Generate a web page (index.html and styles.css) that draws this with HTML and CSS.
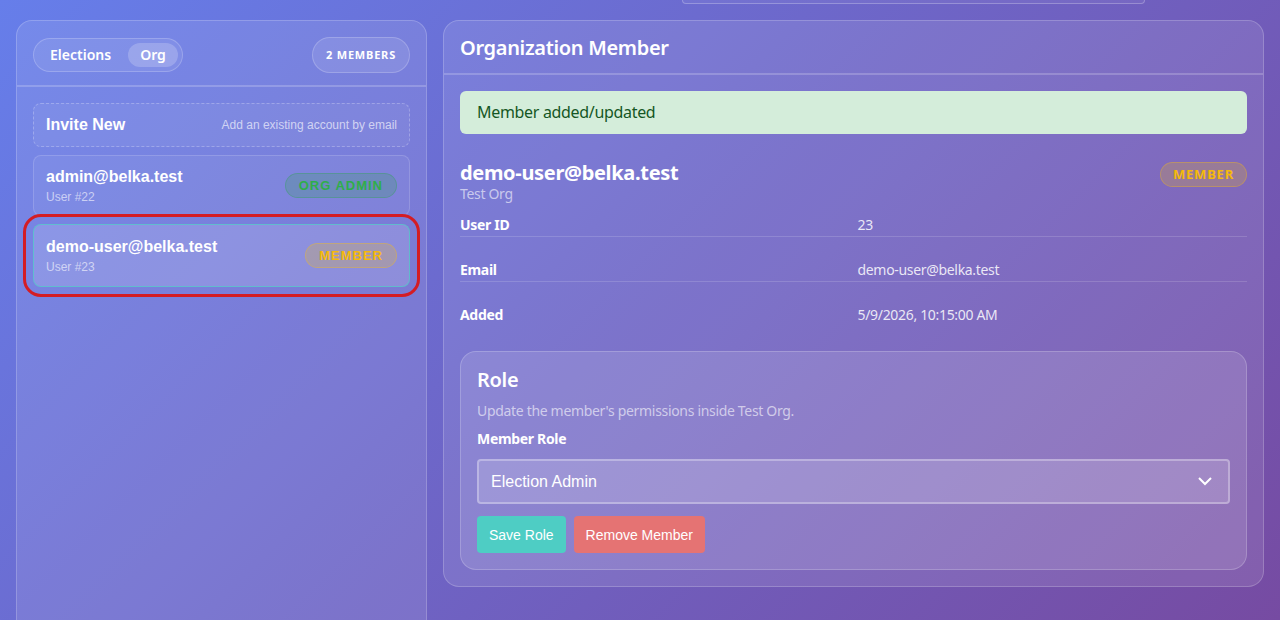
FILE: index.html
```html
<!DOCTYPE html>
<html lang="en">
<head>
    <meta charset="UTF-8">
    <meta name="viewport" content="width=device-width, initial-scale=1.0">
    <title>Organization Member</title>
    <link rel="stylesheet" href="styles.css">
</head>
<body>
    <div class="top-strip"></div>
    <div class="layout">
        <aside class="panel sidebar">
            <div class="sidebar-head">
                <div class="toggle">
                    <span class="toggle-item">Elections</span>
                    <span class="toggle-item active">Org</span>
                </div>
                <span class="count">2 MEMBERS</span>
            </div>
            <div class="list">
                <div class="invite">
                    <strong>Invite New</strong>
                    <span>Add an existing account by email</span>
                </div>
                <div class="member">
                    <div>
                        <div class="member-email">admin@belka.test</div>
                        <div class="member-sub">User #22</div>
                    </div>
                    <span class="tag tag-admin">ORG ADMIN</span>
                </div>
                <div class="member selected">
                    <div>
                        <div class="member-email">demo-user@belka.test</div>
                        <div class="member-sub">User #23</div>
                    </div>
                    <span class="tag tag-member">MEMBER</span>
                </div>
            </div>
        </aside>

        <main class="panel detail">
            <div class="detail-head">Organization Member</div>
            <div class="detail-body">
                <div class="alert">Member added/updated</div>

                <div class="who">
                    <div>
                        <div class="who-name">demo-user@belka.test</div>
                        <div class="who-org">Test Org</div>
                    </div>
                    <span class="badge">MEMBER</span>
                </div>

                <div class="info">
                    <div class="info-row"><span class="info-label">User ID</span><span>23</span></div>
                    <div class="info-row"><span class="info-label">Email</span><span>demo-user@belka.test</span></div>
                    <div class="info-row last"><span class="info-label">Added</span><span>5/9/2026, 10:15:00 AM</span></div>
                </div>

                <div class="role-card">
                    <h2>Role</h2>
                    <p class="hint">Update the member's permissions inside Test Org.</p>
                    <label class="field-label" for="role">Member Role</label>
                    <div class="select-wrap">
                        <select id="role">
                            <option>Election Admin</option>
                            <option>Org Admin</option>
                            <option>Member</option>
                        </select>
                        <svg class="chevron" width="16" height="16" viewBox="0 0 16 16"><path d="M2 5l6 6 6-6" fill="none" stroke="#fff" stroke-width="2"/></svg>
                    </div>
                    <div class="actions">
                        <button class="btn btn-save">Save Role</button>
                        <button class="btn btn-remove">Remove Member</button>
                    </div>
                </div>
            </div>
        </main>
    </div>
</body>
</html>
```

FILE: styles.css
```css
body {
    margin: 0;
    min-height: 100vh;
    font-family: "Noto Sans", "Open Sans", sans-serif;
    letter-spacing: -0.02em;
    color: #fff;
    background: linear-gradient(135deg, #667eea 0%, #764ba2 100%);
    background-attachment: fixed;
}
.top-strip {
    height: 3px;
    margin: 0 135px 0 682px;
    border: 1px solid rgba(255, 255, 255, 0.25);
    border-top: none;
    border-radius: 0 0 12px 12px;
    background: rgba(255, 255, 255, 0.05);
}
.layout {
    display: grid;
    grid-template-columns: 411px 1fr;
    gap: 16px;
    padding: 16px 16px 0;
    align-items: start;
}
.panel {
    background: rgba(255, 255, 255, 0.1);
    border: 1px solid rgba(255, 255, 255, 0.2);
    border-radius: 16px;
    box-sizing: border-box;
}
.sidebar {
    min-height: 640px;
}
.sidebar-head {
    display: flex;
    align-items: center;
    justify-content: space-between;
    padding: 16px 16px 12px;
    border-bottom: 2px solid rgba(255, 255, 255, 0.2);
}
.toggle {
    display: flex;
    gap: 5px;
    padding: 4px;
    border: 1px solid rgba(255, 255, 255, 0.2);
    border-radius: 20px;
    background: rgba(255, 255, 255, 0.08);
}
.toggle-item {
    font-size: 14px;
    font-weight: 600;
    letter-spacing: 0;
    padding: 3px 12px;
    border-radius: 14px;
    line-height: 18px;
}
.toggle-item.active {
    background: rgba(255, 255, 255, 0.2);
}
.count {
    font-size: 11px;
    font-weight: 700;
    letter-spacing: 0.8px;
    padding: 10px 13px;
    line-height: 14px;
    border: 1px solid rgba(255, 255, 255, 0.2);
    border-radius: 20px;
    background: rgba(255, 255, 255, 0.1);
}
.list {
    display: flex;
    flex-direction: column;
    gap: 8px;
    padding: 16px;
    font-family: "Liberation Sans", Arial, sans-serif;
    letter-spacing: normal;
}
.invite {
    display: flex;
    justify-content: space-between;
    align-items: center;
    padding: 12px;
    border: 1px dashed rgba(255, 255, 255, 0.25);
    border-radius: 8px;
    background: rgba(255, 255, 255, 0.05);
}
.invite strong {
    font-size: 16px;
}
.invite span {
    font-size: 12px;
    color: rgba(255, 255, 255, 0.65);
}
.member {
    display: flex;
    justify-content: space-between;
    align-items: center;
    padding: 11px 12px;
    border: 1px solid rgba(255, 255, 255, 0.15);
    border-radius: 8px;
    background: rgba(255, 255, 255, 0.05);
}
.member.selected {
    background: rgba(255, 255, 255, 0.15);
    border-color: rgba(78, 205, 196, 0.7);
    outline: 3px solid #d41c24;
    outline-offset: 7px;
    padding: 12px;
}
.member-email {
    font-size: 16px;
    font-weight: 700;
    line-height: 19px;
}
.member-sub {
    font-size: 12px;
    color: rgba(255, 255, 255, 0.6);
    margin-top: 4px;
}
.tag {
    font-size: 13px;
    font-weight: 700;
    letter-spacing: 1px;
    padding: 4px 13px;
    border-radius: 14px;
    line-height: 15px;
}
.tag-admin {
    color: #2fae4a;
    background: rgba(40, 167, 69, 0.2);
    border: 1px solid rgba(40, 167, 69, 0.3);
}
.tag-member {
    color: #f5b90a;
    background: rgba(255, 193, 7, 0.2);
    border: 1px solid rgba(255, 193, 7, 0.3);
}
.detail-head {
    font-size: 20px;
    font-weight: 600;
    padding: 15px 16px 13px;
    line-height: 24px;
    border-bottom: 2px solid rgba(255, 255, 255, 0.2);
}
.detail-body {
    padding: 16px;
}
.alert {
    background: #d4edda;
    color: #155724;
    border-radius: 6px;
    padding: 11px 17px;
    font-size: 16px;
    line-height: 21px;
}
.who {
    display: flex;
    justify-content: space-between;
    align-items: flex-start;
    margin-top: 28px;
    height: 41px;
}
.who-name {
    font-size: 20px;
    font-weight: 700;
    line-height: 22px;
}
.who-org {
    font-size: 14px;
    color: rgba(255, 255, 255, 0.6);
    line-height: 16px;
    margin-top: 2px;
}
.badge {
    font-size: 13px;
    font-weight: 700;
    letter-spacing: 0.8px;
    color: #f5b90a;
    background: rgba(255, 193, 7, 0.2);
    border: 1px solid rgba(255, 193, 7, 0.3);
    border-radius: 14px;
    padding: 3px 12px;
    line-height: 17px;
}
.info {
    font-size: 14px;
}
.info-row {
    display: grid;
    grid-template-columns: 1fr 1fr;
    column-gap: 8px;
    padding: 23px 0 1px;
    line-height: 20px;
    border-bottom: 1px solid rgba(255, 255, 255, 0.15);
}
.info-row:first-child {
    padding-top: 12px;
}
.info-row.last {
    border-bottom: none;
}
.info-row span:last-child {
    color: rgba(255, 255, 255, 0.85);
}
.info-label {
    font-weight: 700;
}
.role-card {
    margin-top: 25px;
    padding: 16px;
    border: 1px solid rgba(255, 255, 255, 0.2);
    border-radius: 16px;
    background: rgba(255, 255, 255, 0.12);
}
.role-card h2 {
    margin: 0;
    font-size: 20px;
    font-weight: 600;
    line-height: 24px;
}
.hint {
    margin: 9px 0 0;
    font-size: 14px;
    line-height: 20px;
    color: rgba(255, 255, 255, 0.6);
}
.field-label {
    display: block;
    margin: 8px 0 10px;
    font-size: 14px;
    font-weight: 700;
    line-height: 20px;
}
.select-wrap {
    position: relative;
}
.select-wrap select {
    width: 100%;
    height: 45px;
    appearance: none;
    padding: 0 12px;
    font-family: "Liberation Sans", Arial, sans-serif;
    font-size: 16px;
    color: #fff;
    background: rgba(255, 255, 255, 0.15);
    border: 2px solid rgba(255, 255, 255, 0.3);
    border-radius: 4px;
}
.chevron {
    position: absolute;
    right: 17px;
    top: 14px;
    pointer-events: none;
}
.actions {
    display: flex;
    gap: 8px;
    margin-top: 12px;
}
.btn {
    height: 37px;
    padding: 0 12px;
    border: none;
    border-radius: 4px;
    color: #fff;
    font-family: "Liberation Sans", Arial, sans-serif;
    font-size: 14px;
    cursor: pointer;
}
.btn-save {
    background: #4ecdc4;
}
.btn-remove {
    background: #e57373;
}
```
